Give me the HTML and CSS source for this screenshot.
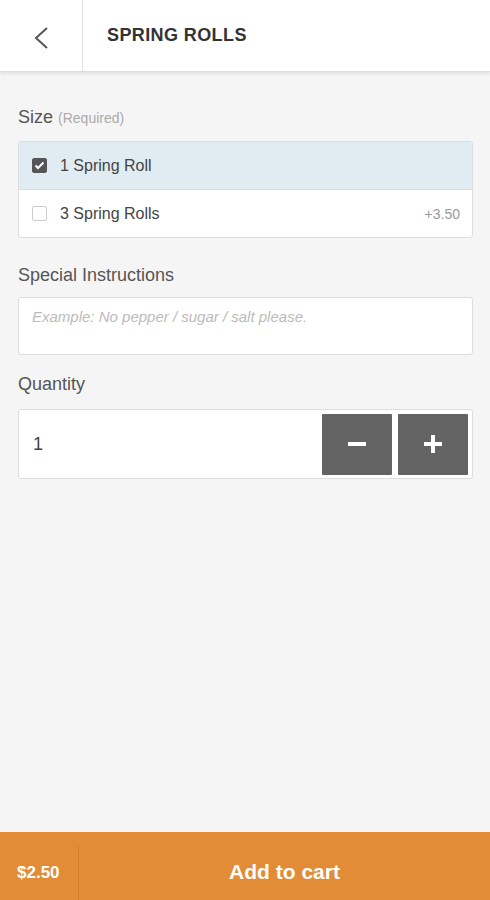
FILE: index.html
```html
<!DOCTYPE html>
<html lang="en">
<head>
	<meta http-equiv="content-type" content="text/html; charset=UTF-8">
	<meta name="viewport" content="width=device-width, initial-scale=1">
	<title>Spring Rolls</title>
	<link rel="stylesheet" href="styles.css">
</head>
<body>
	<!-- Top bar -->
	<header class="topbar">
		<a class="back-btn" href="#">
			<svg width="16" height="24" viewBox="0 0 16 24"><polyline points="14,2 3,12 14,22" fill="none" stroke="#555" stroke-width="2"/></svg>
		</a>
		<h1 class="title">SPRING ROLLS</h1>
	</header>
	<!-- Item options -->
	<main class="content">
		<section class="group group-size">
			<div class="group-label">Size <small>(Required)</small></div>
			<div class="options">
				<label class="option selected">
					<span class="check checked">
						<svg width="11" height="9" viewBox="0 0 11 9"><polyline points="1.5,4.5 4,7 9.5,1.5" fill="none" stroke="#fff" stroke-width="2"/></svg>
					</span>
					<span class="option-name">1 Spring Roll</span>
				</label>
				<label class="option">
					<span class="check"></span>
					<span class="option-name">3 Spring Rolls</span>
					<span class="option-price">+3.50</span>
				</label>
			</div>
		</section>
		<section class="group group-notes">
			<div class="group-label">Special Instructions</div>
			<textarea class="notes" placeholder="Example: No pepper / sugar / salt please."></textarea>
		</section>
		<section class="group group-qty">
			<div class="group-label">Quantity</div>
			<div class="qty-box">
				<span class="qty-value">1</span>
				<button class="qty-btn">
					<svg width="20" height="20" viewBox="0 0 20 20"><rect x="1" y="8" width="18" height="4" fill="#fff"/></svg>
				</button>
				<button class="qty-btn">
					<svg width="20" height="20" viewBox="0 0 20 20"><rect x="1" y="8" width="18" height="4" fill="#fff"/><rect x="8" y="1" width="4" height="18" fill="#fff"/></svg>
				</button>
			</div>
		</section>
	</main>
	<!-- Cart bar -->
	<footer class="cart-bar">
		<div class="cart-total">$2.50</div>
		<button class="cart-add">Add to cart</button>
	</footer>
</body>
</html>
```

FILE: styles.css
```css
* {
	box-sizing: border-box;
}
html {
	font-family: "Liberation Sans", Arial, sans-serif;
	width: 100%;
	height: 100%;
	margin: 0;
	padding: 0;
	background-color: #f5f5f5;
	color: #444;
}
body {
	width: 100%;
	height: 100%;
	margin: 0;
	padding: 0;
	display: flex;
	flex-direction: column;
}
button {
	font-family: inherit;
	border: 0;
	outline: none;
}
.topbar {
	display: flex;
	align-items: stretch;
	height: 72px;
	background: #fff;
	border-bottom: 1px solid #ddd;
	box-shadow: 0 2px 3px rgba(0, 0, 0, 0.08);
	flex-shrink: 0;
}
.back-btn {
	width: 83px;
	display: flex;
	justify-content: center;
	align-items: center;
	padding-top: 4px;
	border-right: 1px solid #e3e3e3;
}
.title {
	margin: 0;
	padding-left: 24px;
	display: flex;
	align-items: center;
	font-size: 18px;
	font-weight: bold;
	letter-spacing: 0.4px;
	color: #333;
}
.content {
	flex: 1;
	padding: 35px 17px 0 18px;
}
.group-label {
	font-size: 18px;
	line-height: 20px;
	color: #555;
}
.group-label small {
	font-size: 14px;
	line-height: 1;
	color: #aaa;
}
.group-size .group-label {
	margin-bottom: 14px;
}
.group-notes {
	margin-top: 27px;
}
.group-notes .group-label {
	margin-bottom: 12px;
}
.group-qty {
	margin-top: 19px;
}
.group-qty .group-label {
	margin-bottom: 15px;
}
.options {
	background: #fff;
	border: 1px solid #ddd;
	border-radius: 3px;
	overflow: hidden;
}
.option {
	display: flex;
	align-items: center;
	height: 47px;
	padding: 0 12px 0 13px;
	font-size: 16px;
	color: #444;
}
.option + .option {
	height: 48px;
	border-top: 1px solid #d5dde1;
}
.option.selected {
	background: #e1ecf2;
}
.check {
	width: 15px;
	height: 15px;
	margin-right: 13px;
	border: 1px solid #ccc;
	border-radius: 2px;
	background: #fff;
	display: flex;
	justify-content: center;
	align-items: center;
}
.check.checked {
	background: #555;
	border-color: #555;
}
.option-name {
	flex: 1;
}
.option-price {
	font-size: 14px;
	color: #999;
}
.notes {
	display: block;
	width: 100%;
	height: 58px;
	margin: 0;
	padding: 10px 13px;
	border: 1px solid #ddd;
	border-radius: 3px;
	background: #fff;
	resize: none;
	font-family: inherit;
	font-size: 15px;
	line-height: 18px;
	outline: none;
}
.notes::placeholder {
	font-style: italic;
	color: #bbb;
}
.qty-box {
	display: flex;
	align-items: center;
	gap: 6px;
	height: 70px;
	padding: 0 4px 0 14px;
	background: #fff;
	border: 1px solid #ddd;
	border-radius: 3px;
}
.qty-value {
	flex: 1;
	font-size: 18px;
	color: #444;
}
.qty-btn {
	width: 70px;
	height: 61px;
	background: #636363;
	border-radius: 1px;
	display: flex;
	justify-content: center;
	align-items: center;
}
.cart-bar {
	display: flex;
	height: 68px;
	flex-shrink: 0;
	background: #e28c37;
	color: #fff;
}
.cart-total {
	width: 79px;
	margin-top: 14px;
	padding-left: 17px;
	display: flex;
	align-items: center;
	font-size: 17px;
	font-weight: bold;
	border-right: 1px solid #d17f2f;
}
.cart-add {
	flex: 1;
	background: transparent;
	color: #fff;
	font-size: 21px;
	font-weight: bold;
	padding-top: 12px;
}
```
